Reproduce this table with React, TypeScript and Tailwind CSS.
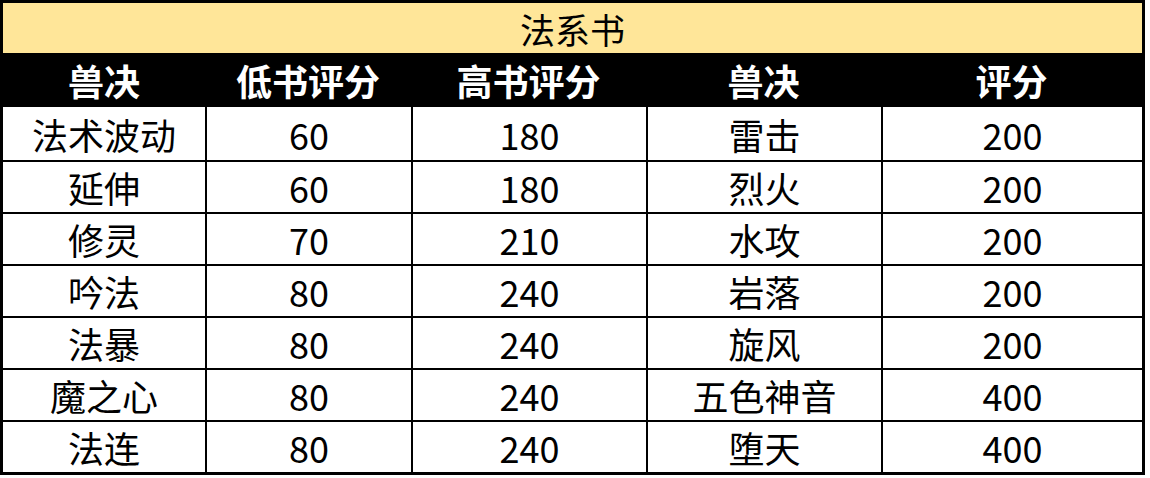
const rows = [
  ["法术波动", "60", "180", "雷击", "200"],
  ["延伸", "60", "180", "烈火", "200"],
  ["修灵", "70", "210", "水攻", "200"],
  ["吟法", "80", "240", "岩落", "200"],
  ["法暴", "80", "240", "旋风", "200"],
  ["魔之心", "80", "240", "五色神音", "400"],
  ["法连", "80", "240", "堕天", "400"],
];

const headers = ["兽决", "低书评分", "高书评分", "兽决", "评分"];

const cols = "grid grid-cols-[202px_206px_235px_235px_261px]";

export default function App() {
  return (
    <div className="w-[1150px] h-[478px] bg-white" style={{ fontFamily: '"Noto Sans CJK SC", "Noto Sans", sans-serif' }}>
      <div className="w-[1145px] border-[3px] border-black">
        <div className="h-[50px] bg-[#ffe699] flex items-center justify-center text-[35px] text-black leading-none">
          法系书
        </div>
        <div className={`${cols} h-[54px] bg-black text-white font-bold text-[36px] leading-none`}>
          {headers.map((h, i) => (
            <div key={i} className="flex items-center justify-center">
              {h}
            </div>
          ))}
        </div>
        {rows.map((r, ri) => (
          <div
            key={ri}
            className={`${cols} text-black text-[36px] leading-none ${ri === 0 ? "h-[53px]" : "h-[52px] border-t-2 border-black"}`}
          >
            {r.map((c, ci) => (
              <div
                key={ci}
                className={`flex items-center justify-center ${ci > 0 ? "border-l-2 border-black" : ""}`}
              >
                {c}
              </div>
            ))}
          </div>
        ))}
      </div>
    </div>
  );
}
